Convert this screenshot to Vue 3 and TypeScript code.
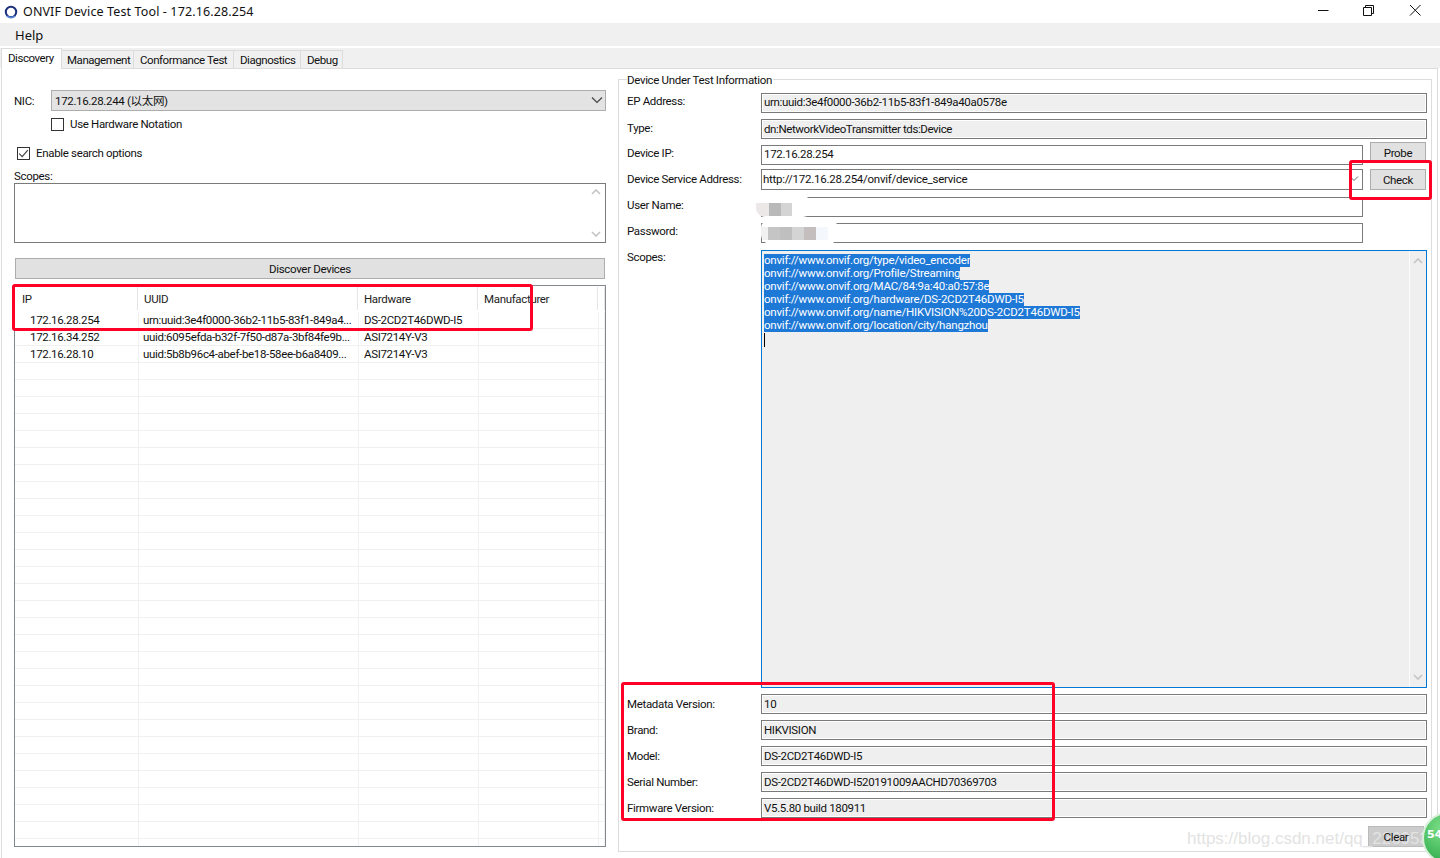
<script setup lang="ts">
const tabs = ['Management', 'Conformance Test', 'Diagnostics', 'Debug']
const devices = [
  ['172.16.28.254', 'urn:uuid:3e4f0000-36b2-11b5-83f1-849a4...', 'DS-2CD2T46DWD-I5'],
  ['172.16.34.252', 'uuid:6095efda-b32f-7f50-d87a-3bf84fe9b...', 'ASI7214Y-V3'],
  ['172.16.28.10', 'uuid:5b8b96c4-abef-be18-58ee-b6a8409...', 'ASI7214Y-V3'],
]
const rows: string[][] = [...devices, ...Array.from({ length: 29 }, () => ['', '', ''])]
const scopes = [
  'onvif://www.onvif.org/type/video_encoder',
  'onvif://www.onvif.org/Profile/Streaming',
  'onvif://www.onvif.org/MAC/84:9a:40:a0:57:8e',
  'onvif://www.onvif.org/hardware/DS-2CD2T46DWD-I5',
  'onvif://www.onvif.org/name/HIKVISION%20DS-2CD2T46DWD-I5',
  'onvif://www.onvif.org/location/city/hangzhou',
]
const info = [
  ['Metadata Version:', '10'],
  ['Brand:', 'HIKVISION'],
  ['Model:', 'DS-2CD2T46DWD-I5'],
  ['Serial Number:', 'DS-2CD2T46DWD-I520191009AACHD70369703'],
  ['Firmware Version:', 'V5.5.80 build 180911'],
]
</script>

<template>
  <div class="app">
    <header class="title">
      <svg class="logo" width="14" height="14" viewBox="0 0 14 14">
        <circle cx="7" cy="7" r="5.2" fill="none" stroke="#1c2f7a" stroke-width="2" />
        <path d="M3 11a5.6 5.6 0 0 0 8 0" fill="none" stroke="#5a8fe0" stroke-width="1.6" />
      </svg>
      <span class="title-text">ONVIF Device Test Tool - 172.16.28.254</span>
      <div class="controls">
        <svg width="46" height="23" viewBox="0 0 46 23"><path d="M18 10.5h10.5" stroke="#111" fill="none" /></svg>
        <svg width="46" height="23" viewBox="0 0 46 23">
          <path d="M17.5 7.5h8v8h-8zM19.5 7.5v-2h8v8h-2" stroke="#111" fill="none" />
        </svg>
        <svg width="46" height="23" viewBox="0 0 46 23"><path d="M18 5l10.5 10.5M28.5 5L18 15.5" stroke="#111" fill="none" /></svg>
      </div>
    </header>
    <nav class="menu"><span>Help</span></nav>
    <div class="tabs">
      <div class="tab active">Discovery</div>
      <div v-for="t in tabs" :key="t" class="tab">{{ t }}</div>
    </div>

    <main class="page">
      <section class="left">
        <div class="nic">
          <label class="nic-label">NIC:</label>
          <div class="select">
            <span>172.16.28.244 (以太网)</span>
            <svg width="12" height="8" viewBox="0 0 12 8"><path d="M1 1.5l5 5 5-5" fill="none" stroke="#444" stroke-width="1.2" /></svg>
          </div>
        </div>
        <div class="check hw"><i class="box"></i><span>Use Hardware Notation</span></div>
        <div class="check search">
          <i class="box">
            <svg width="13" height="13" viewBox="0 0 13 13"><path d="M2.2 6.6l3 3 5.6-6.4" fill="none" stroke="#444" stroke-width="1.2" /></svg>
          </i>
          <span>Enable search options</span>
        </div>
        <div class="scopes-label">Scopes:</div>
        <div class="textarea">
          <svg width="10" height="6" viewBox="0 0 10 6"><path d="M1 5l4-4 4 4" fill="none" stroke="#c4c4c4" stroke-width="1.6" /></svg>
          <svg width="10" height="6" viewBox="0 0 10 6"><path d="M1 1l4 4 4-4" fill="none" stroke="#c4c4c4" stroke-width="1.6" /></svg>
        </div>
        <button class="discover">Discover Devices</button>
        <div class="list">
          <div class="list-head">
            <div class="hcell ip">IP</div>
            <div class="hcell">UUID</div>
            <div class="hcell">Hardware</div>
            <div class="hcell">Manufacturer</div>
            <div class="hcell"></div>
          </div>
          <div v-for="(r, i) in rows" :key="i" class="list-row">
            <div class="cell ipcell">{{ r[0] }}</div>
            <div class="cell">{{ r[1] }}</div>
            <div class="cell hwcell">{{ r[2] }}</div>
            <div class="cell"></div>
            <div class="cell"></div>
          </div>
        </div>
      </section>

      <section class="group">
        <div class="legend">Device Under Test Information</div>
        <div class="row r-ep up"><label>EP Address:</label><div class="field ro">urn:uuid:3e4f0000-36b2-11b5-83f1-849a40a0578e</div></div>
        <div class="row r-6"><label>Type:</label><div class="field ro type">dn:NetworkVideoTransmitter tds:Device</div></div>
        <div class="row r-6 narrow up">
          <label>Device IP:</label><div class="field">172.16.28.254</div>
          <button class="btn probe">Probe</button>
        </div>
        <div class="row r-dsa narrow">
          <label>Device Service Address:</label>
          <div class="field combo">
            <span class="url">http://172.16.28.254/onvif/device_service</span>
            <svg width="9" height="6" viewBox="0 0 9 6"><path d="M1 1.5l3 3 4-4" fill="none" stroke="#666" /></svg>
          </div>
          <button class="btn check-btn">Check</button>
        </div>
        <div class="row r-user narrow up"><label>User Name:</label><div class="field"></div><div class="spacer"></div></div>
        <div class="row r-6 narrow up"><label>Password:</label><div class="field"></div><div class="spacer"></div></div>
        <div class="row r-scopes">
          <label>Scopes:</label>
          <div class="scopes">
            <div class="scope-text">
              <div v-for="s in scopes" :key="s" class="line"><span>{{ s }}</span></div>
              <i class="caret"></i>
            </div>
            <div class="scrollbar">
              <svg width="10" height="6" viewBox="0 0 10 6"><path d="M1 5l4-4 4 4" fill="none" stroke="#c4c4c4" stroke-width="1.6" /></svg>
              <svg width="10" height="6" viewBox="0 0 10 6"><path d="M1 1l4 4 4-4" fill="none" stroke="#c4c4c4" stroke-width="1.6" /></svg>
            </div>
          </div>
        </div>
        <div v-for="(r, i) in info" :key="r[0]" class="row low" :class="i === 0 ? 'r-meta' : 'r-6'">
          <label>{{ r[0] }}</label><div class="field ro">{{ r[1] }}</div>
        </div>
        <div class="clear-row"><button class="btn clear"><span class="clear-label">Clear</span></button></div>
      </section>
    </main>

    <div class="blur user-blur"></div>
    <div class="blur pass-blur"></div>
    <div class="mark m1"></div>
    <div class="mark m2"></div>
    <div class="mark m3"></div>
    <div class="watermark">https://blog.csdn.net/qq_22695336</div>
    <div class="badge">54</div>
  </div>
</template>

<style>
html, body { margin: 0; background: #fff; }
</style>

<style scoped>
.app {
  position: relative;
  width: 1440px;
  height: 858px;
  overflow: hidden;
  background: #fff;
  display: flex;
  flex-direction: column;
  font-family: Roboto, "Noto Sans CJK SC", sans-serif;
  font-size: 11.5px;
  letter-spacing: -0.33px;
  color: #111;
}
.title { height: 23px; display: flex; align-items: center; flex: none; letter-spacing: 0.12px; }
.logo { margin-left: 4px; }
.title-text { margin-left: 5px; font-family: "Noto Sans", sans-serif; font-size: 12.5px; }
.controls { margin-left: auto; margin-right: 2px; display: flex; }
.controls svg { display: block; }
.menu { height: 23px; flex: none; background: #f0f0f0; display: flex; align-items: center; padding-left: 15px; font-size: 13px; font-family: "Noto Sans", sans-serif; letter-spacing: 0; }
.tabs { margin-top: 2px; height: 20px; flex: none; background: #f0f0f0; display: flex; align-items: flex-end; padding-left: 1px; }
.tab {
  padding: 0 0 0 6px; line-height: 19px; background: #f0f0f0;
  border-top: 1px solid #dcdcdc; border-right: 1px solid #dcdcdc; box-sizing: border-box;
  height: 18px; white-space: nowrap; letter-spacing: -0.45px;
}
.tab:nth-child(2) { width: 72px; padding-left: 5px; }
.tab:nth-child(3) { width: 100px; }
.tab:nth-child(4) { width: 67px; }
.tab:nth-child(5) { width: 42px; }
.tab.active {
  width: 61px; background: #fff; line-height: 19px;
  border-left: 1px solid #dcdcdc; margin-bottom: -1px; height: 21px; position: relative;
}
.page {
  flex: 1; margin: 0 2px 0 1px; border: 1px solid #dcdcdc; border-bottom: none;
  display: flex; align-items: flex-start; min-height: 0;
}
.left { width: 592px; margin-left: 12px; padding-top: 21px; flex: none; }
.nic { display: flex; align-items: center; height: 21px; }
.nic-label { width: 37px; flex: none; }
.select {
  flex: 1; height: 21px; box-sizing: border-box; background: #e3e3e3; border: 1px solid #adadad;
  display: flex; align-items: center; justify-content: space-between; padding: 0 2px 1px 3px;
}
.check { display: flex; align-items: center; gap: 6px; height: 14px; }
.hw { margin: 6px 0 0 37px; }
.search { margin: 15px 0 0 3px; }
.box { width: 13px; height: 13px; box-sizing: border-box; border: 1px solid #333; background: #fff; display: block; position: relative; }
.box svg { position: absolute; left: -1px; top: -1px; }
.scopes-label { margin-top: 10px; height: 13px; line-height: 13px; }
.textarea {
  height: 60px; box-sizing: border-box; border: 1px solid #7a7a7a; display: flex; flex-direction: column;
  align-items: flex-end; justify-content: space-between; padding: 5px 4px 5px 0; background: #fff;
}
.textarea svg { display: block; }
.discover {
  display: block; width: 590px; margin: 15px 0 0 1px; height: 21px; box-sizing: border-box;
  background: #e1e1e1; border: 1px solid #adadad; padding: 0; font: inherit; letter-spacing: inherit; color: inherit; text-align: center;
}
.list { margin-top: 6px; height: 562px; box-sizing: border-box; border: 1px solid #828790; overflow: hidden; background: #fff; }
.list-head { display: grid; grid-template-columns: 123px 220px 120px 120px 1fr; height: 26px; }
.hcell { border-right: 1px solid #e5e5e5; padding-left: 6px; line-height: 24px; height: 23px; margin-top: 1px; white-space: nowrap; color: #222; }
.hcell.ip { padding-left: 7px; }
.list-row { display: grid; grid-template-columns: 124px 220px 120px 120px 1fr; height: 17px; box-sizing: border-box; border-bottom: 1px solid #f0f0f0; }
.cell { border-right: 1px solid #f0f0f0; padding-left: 4px; line-height: 16px; white-space: nowrap; overflow: hidden; }
.ipcell { padding-left: 15px; }
.hwcell { padding-left: 5px; }
.group {
  position: relative; margin: 10px 0 0 12px; width: 814px; height: 773px; box-sizing: border-box;
  border: 1px solid #dcdcdc; padding: 0 4px 0 8px;
}
.legend { width: fit-content; height: 13px; line-height: 13px; margin: -6px 0 0 0; background: #fff; padding-right: 1px; }
.row { display: flex; height: 20px; align-items: flex-start; }
.row label { width: 134px; flex: none; line-height: 18px; }
.up label { line-height: 16px; }
.up .field { line-height: 16px; }
.low label { line-height: 20px; }
.r-ep { margin-top: 6px; }
.r-6 { margin-top: 6px; }
.r-dsa { margin-top: 4px; height: 21px; }
.r-dsa label { line-height: 20px; }
.r-user { margin-top: 7px; }
.r-scopes { margin-top: 7px; height: 438px; }
.r-scopes label { line-height: 14px; }
.r-meta { margin-top: 6px; }
.field {
  flex: 1; height: 20px; box-sizing: border-box; border: 1px solid #7a7a7a; background: #fff;
  line-height: 18px; padding-left: 2px; white-space: nowrap; overflow: hidden;
}
.ro { background: #efefef; box-shadow: inset 0 0 0 1px #fff; }
.type { letter-spacing: -0.4px; padding-top: 1px; line-height: 17px; }
.combo { height: 21px; display: flex; align-items: center; justify-content: space-between; padding: 0 3px 1px 1px; }
.url { letter-spacing: -0.25px; }
.narrow .field { flex: none; width: 602px; }
.btn {
  background: #e1e1e1; border: 1px solid #adadad; box-sizing: border-box; font: inherit; letter-spacing: inherit; color: inherit;
  padding: 0; text-align: center;
}
.probe, .check-btn { width: 56px; margin-left: 7px; height: 21px; }
.probe { margin-top: -3px; }
.spacer { width: 64px; }
.scopes {
  flex: 1; height: 438px; box-sizing: border-box; border: 1px solid #0078d7; background: #efefef;
  display: flex; min-width: 0;
}
.scope-text { flex: 1; padding: 3px 0 0 2px; }
.line { height: 13px; line-height: 13px; white-space: nowrap; letter-spacing: -0.22px; }
.line span { background: #1e78d6; color: #fff; display: inline-block; height: 13px; }
.caret { display: block; width: 1px; height: 14px; background: #000; margin-top: 1px; }
.scrollbar {
  width: 17px; flex: none; border-left: 1px solid #fbfbfb; box-sizing: border-box; display: flex; flex-direction: column;
  justify-content: space-between; align-items: center; padding: 7px 0;
}
.scrollbar svg { display: block; }
.clear-row { display: flex; justify-content: flex-end; margin-top: 8px; padding-right: 3px; }
.clear { width: 56px; height: 21px; background: #ccc; border-color: #bbb; }
.clear-label { position: relative; z-index: 2; }

.mark { position: absolute; border: 3px solid #ff0027; border-radius: 3px; box-sizing: border-box; pointer-events: none; }
.m1 { left: 12px; top: 284px; width: 521px; height: 47px; }
.m2 { left: 1349px; top: 160px; width: 83px; height: 40px; }
.m3 { left: 621px; top: 682px; width: 434px; height: 139px; }
.blur { position: absolute; border-radius: 9px; }
.user-blur {
  left: 756px; top: 196px; width: 56px; height: 21px;
  background: linear-gradient(90deg, #ece8e8 0 13px, #b9b9b9 13px 25px, #d4d4d4 25px 36px, #fff 36px) 0 7px / 100% 13px no-repeat, #fff;
}
.pass-blur {
  left: 761px; top: 219px; width: 77px; height: 25px;
  background: linear-gradient(90deg, #f1f1f1 0 7px, #c5c5c5 7px 19px, #bfbfbf 19px 31px, #d4d4d4 31px 43px, #c4bebe 43px 55px, #f4f8fd 55px 67px, #fff 67px) 0 8px / 100% 13px no-repeat, #fff;
}
.watermark {
  position: absolute; left: 1187px; top: 829px; font-family: "Liberation Sans", sans-serif;
  font-size: 17px; letter-spacing: 0; color: #e3e3e3; white-space: nowrap;
}
.badge {
  position: absolute; left: 1422px; top: 812px; width: 52px; height: 52px; border-radius: 50%; box-sizing: border-box;
  border: 2px solid #d9efd9; background: radial-gradient(circle at 40% 30%, #7fe08a, #35b050 75%);
  color: #fff; font: bold 11px "DejaVu Sans", sans-serif; letter-spacing: 0; padding: 14px 0 0 3px;
}
</style>
